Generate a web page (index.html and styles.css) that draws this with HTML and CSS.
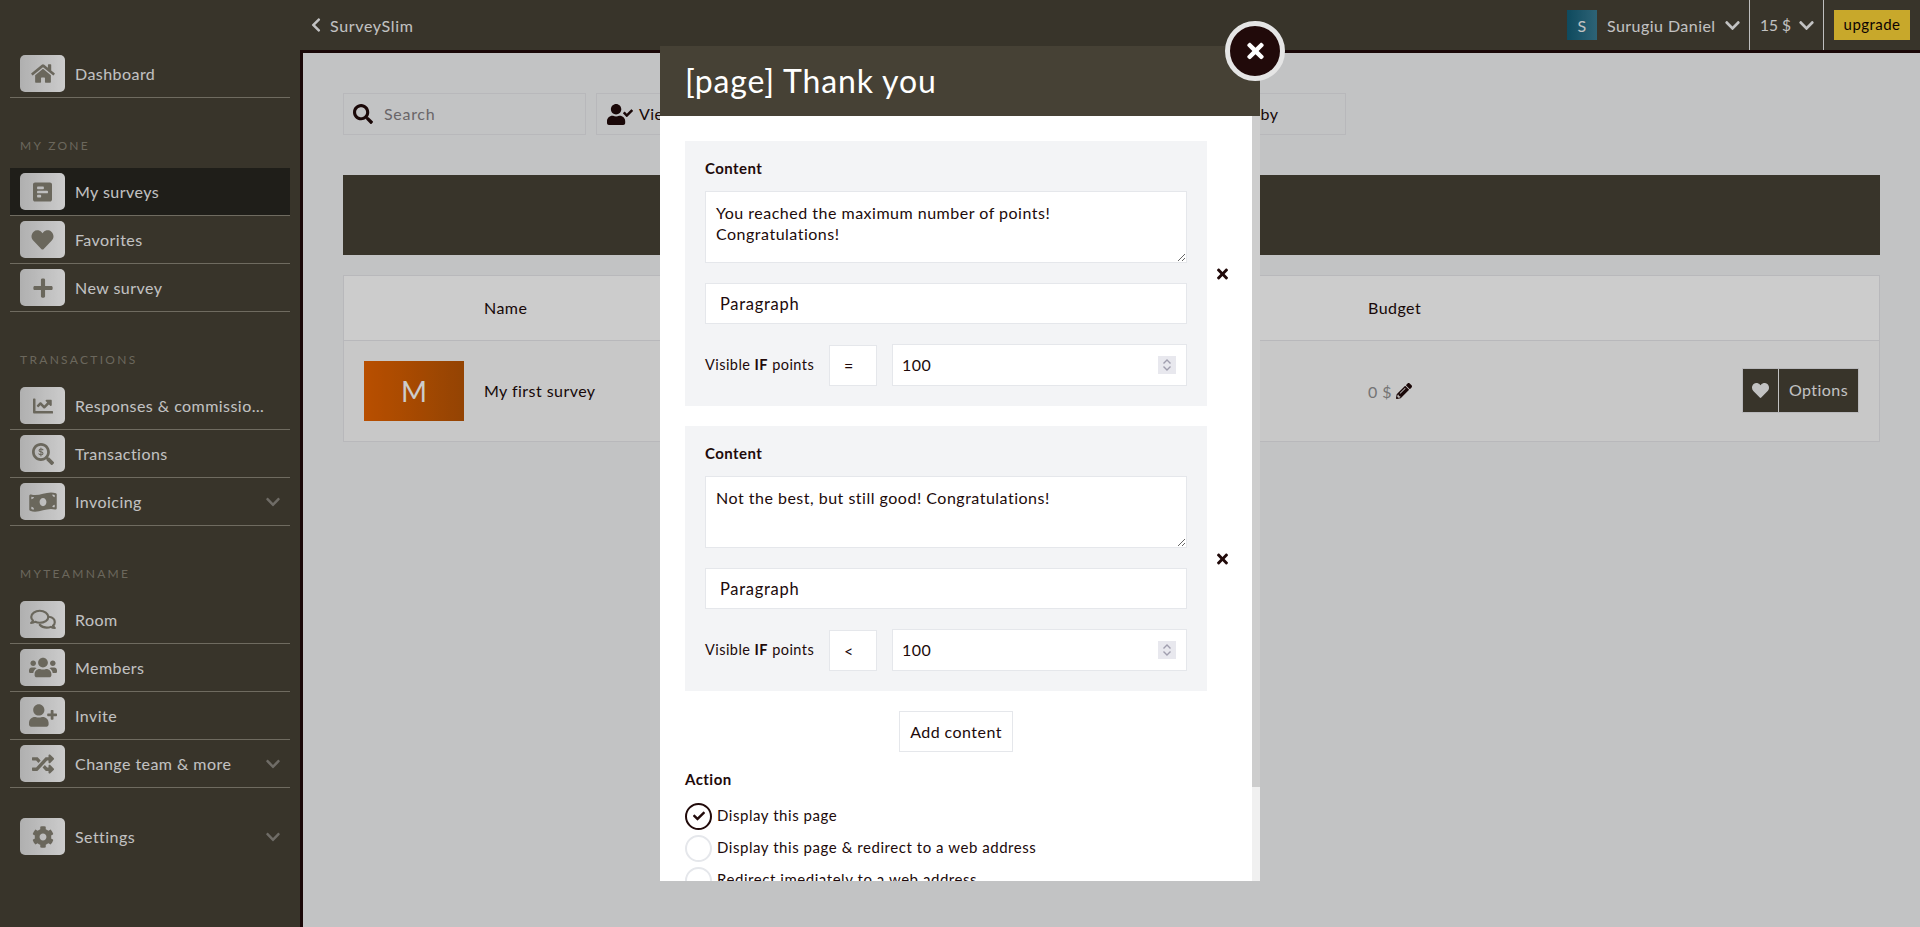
FILE: index.html
```html
<!DOCTYPE html>
<html lang="en">
<head>
<meta charset="utf-8">
<title>SurveySlim</title>
<link rel="stylesheet" href="styles.css">
</head>
<body>
<svg class="sprite" xmlns="http://www.w3.org/2000/svg">
<symbol id="i-down" viewBox="0 0 448 512"><path d="M207.029 381.476L12.686 187.132c-9.373-9.373-9.373-24.569 0-33.941l22.667-22.667c9.357-9.357 24.522-9.375 33.901-.04L224 284.505l154.745-154.021c9.379-9.335 24.544-9.317 33.901.04l22.667 22.667c9.373 9.373 9.373 24.569 0 33.941L240.971 381.476c-9.373 9.372-24.569 9.372-33.942 0z"/></symbol>
<symbol id="i-left" viewBox="0 0 320 512"><path d="M34.52 239.03L228.87 44.69c9.37-9.37 24.57-9.37 33.94 0l22.67 22.67c9.36 9.36 9.37 24.52.04 33.9L131.49 256l154.02 154.75c9.34 9.38 9.32 24.54-.04 33.9l-22.67 22.67c-9.37 9.37-24.57 9.37-33.94 0L34.52 272.97c-9.37-9.37-9.37-24.57 0-33.94z"/></symbol>
<symbol id="i-heart" viewBox="0 0 512 512"><path d="M462.3 62.6C407.5 15.9 326 24.3 275.7 76.2L256 96.5l-19.7-20.3C186.1 24.3 104.5 15.9 49.7 62.6c-62.8 53.6-66.1 149.8-9.9 207.9l193.5 199.8c12.5 12.9 32.8 12.9 45.3 0l193.5-199.8c56.3-58.1 53-154.3-9.8-207.9z"/></symbol>
<symbol id="i-plus" viewBox="0 0 448 512"><path d="M416 208H272V64c0-17.67-14.33-32-32-32h-32c-17.67 0-32 14.33-32 32v144H32c-17.67 0-32 14.33-32 32v32c0 17.67 14.33 32 32 32h144v144c0 17.67 14.33 32 32 32h32c17.67 0 32-14.33 32-32V304h144c17.67 0 32-14.33 32-32v-32c0-17.67-14.33-32-32-32z"/></symbol>
<symbol id="i-search" viewBox="0 0 512 512"><path d="M505 442.7L405.3 343c-4.5-4.5-10.6-7-17-7H372c27.6-35.3 44-79.7 44-128C416 93.1 322.9 0 208 0S0 93.1 0 208s93.1 208 208 208c48.3 0 92.7-16.4 128-44v16.3c0 6.4 2.5 12.5 7 17l99.7 99.7c9.4 9.4 24.6 9.4 33.9 0l28.3-28.3c9.4-9.4 9.4-24.6.1-34zM208 336c-70.7 0-128-57.2-128-128 0-70.7 57.2-128 128-128 70.7 0 128 57.2 128 128 0 70.7-57.2 128-128 128z"/></symbol>
<symbol id="i-dollar-search" viewBox="0 0 512 512"><path d="M505 442.7L405.3 343c-4.5-4.5-10.6-7-17-7H372c27.6-35.3 44-79.7 44-128C416 93.1 322.9 0 208 0S0 93.1 0 208s93.1 208 208 208c48.3 0 92.7-16.4 128-44v16.3c0 6.4 2.5 12.5 7 17l99.7 99.7c9.4 9.4 24.6 9.4 33.9 0l28.3-28.3c9.4-9.4 9.4-24.6.1-34zM208 352c-79.5 0-144-64.500-144-144S128.500 64 208 64s144 64.500 144 144-64.500 144-144 144z"/><path d="M256 160c-8-14-26-20-48-20-24 0-44 12-44 32 0 44 92 24 92 70 0 20-20 32-48 32-24 0-42-8-50-22M208 116v184" fill="none" stroke="currentColor" stroke-width="24" stroke-linecap="round"/></symbol>
<symbol id="i-times" viewBox="0 0 352 512"><path d="M242.72 256l100.07-100.07c12.28-12.28 12.28-32.19 0-44.48l-22.24-22.24c-12.28-12.28-32.19-12.28-44.48 0L176 189.28 75.93 89.21c-12.28-12.28-32.19-12.28-44.48 0L9.21 111.45c-12.28 12.28-12.28 32.19 0 44.48L109.28 256 9.21 356.07c-12.28 12.28-12.28 32.19 0 44.48l22.24 22.24c12.28 12.28 32.2 12.28 44.48 0L176 322.72l100.07 100.07c12.28 12.28 32.2 12.28 44.48 0l22.24-22.24c12.28-12.28 12.28-32.19 0-44.48L242.72 256z"/></symbol>
<symbol id="i-home" viewBox="0 0 576 512"><path d="M280.37 148.26L96 300.11V464a16 16 0 0 0 16 16l112.06-.29a16 16 0 0 0 15.92-16V368a16 16 0 0 1 16-16h64a16 16 0 0 1 16 16v95.64a16 16 0 0 0 16 16.05L464 480a16 16 0 0 0 16-16V300L295.67 148.26a12.19 12.19 0 0 0-15.3 0zM571.6 251.47L488 182.56V44.05a12 12 0 0 0-12-12h-56a12 12 0 0 0-12 12v72.61L318.47 43a48 48 0 0 0-61 0L4.34 251.47a12 12 0 0 0-1.6 16.9l25.5 31A12 12 0 0 0 45.15 301l235.22-193.74a12.19 12.19 0 0 1 15.3 0L530.9 301a12 12 0 0 0 16.9-1.6l25.5-31a12 12 0 0 0-1.7-16.93z"/></symbol>
<symbol id="i-poll" viewBox="0 0 448 512"><path d="M448 432V80c0-26.5-21.5-48-48-48H48C21.5 32 0 53.5 0 80v352c0 26.5 21.5 48 48 48h352c26.500 0 48-21.500 48-48zM112 192c-8.840 0-16-7.160-16-16v-32c0-8.840 7.160-16 16-16h128c8.840 0 16 7.160 16 16v32c0 8.840-7.160 16-16 16H112zm0 96c-8.840 0-16-7.160-16-16v-32c0-8.840 7.160-16 16-16h224c8.840 0 16 7.160 16 16v32c0 8.840-7.160 16-16 16H112zm0 96c-8.840 0-16-7.160-16-16v-32c0-8.840 7.160-16 16-16h64c8.840 0 16 7.160 16 16v32c0 8.840-7.160 16-16 16h-64z"/></symbol>
<symbol id="i-chart" viewBox="0 0 512 512"><path d="M496 384H64V80c0-8.840-7.160-16-16-16H16C7.160 64 0 71.160 0 80v336c0 17.670 14.330 32 32 32h464c8.840 0 16-7.160 16-16v-32c0-8.840-7.160-16-16-16zM464 96H345.940c-21.380 0-32.090 25.850-16.970 40.970l32.400 32.400L288 242.750l-73.370-73.370c-12.500-12.500-32.760-12.500-45.250 0l-68.690 68.690c-6.250 6.250-6.250 16.380 0 22.630l22.620 22.620c6.250 6.250 16.380 6.250 22.630 0L192 237.250l73.370 73.370c12.500 12.500 32.760 12.500 45.250 0l96-96 32.400 32.400c15.120 15.120 40.970 4.410 40.970-16.970V112c.01-8.840-7.150-16-15.990-16z"/></symbol>
<symbol id="i-money" viewBox="0 0 640 512"><path d="M621.160 54.460C582.370 38.190 543.550 32 504.750 32c-123.170-.01-246.330 62.340-369.500 62.340-30.890 0-61.760-3.920-92.650-13.720-3.470-1.100-6.950-1.620-10.350-1.620C15.040 79 0 92.320 0 110.810v317.260c0 12.630 7.230 24.600 18.840 29.460C57.630 473.810 96.450 480 135.250 480c123.170 0 246.340-62.350 369.510-62.350 30.890 0 61.760 3.920 92.650 13.720 3.470 1.100 6.950 1.620 10.350 1.620 17.210 0 32.250-13.320 32.250-31.810V83.930c-.01-12.640-7.240-24.600-18.850-29.470zM48 132.220c20.120 5.040 41.120 7.570 62.720 8.930C104.840 170.540 79 192.690 48 192.690v-60.470zm0 285v-47.780c34.370 0 62.180 27.270 63.710 61.400-22.530-1.810-43.590-6.310-63.710-13.620zM320 352c-44.190 0-80-42.990-80-96 0-53.020 35.820-96 80-96s80 42.980 80 96c0 53.030-35.830 96-80 96zm272 27.780c-17.520-4.390-35.710-6.850-54.320-8.440 5.870-26.080 27.500-45.880 54.320-49.280v57.720zm0-236.110c-30.890-3.910-54.860-29.700-55.810-61.550 19.540 2.170 38.090 6.230 55.810 12.660v48.890z"/></symbol>
<symbol id="i-comments" viewBox="0 0 576 512"><path d="M216 62C112 62 26 124 26 200c0 30 14 58 38 80-8 20-22 38-40 54 36 0 66-10 90-28 30 14 64 22 102 22 104 0 190-56 190-128S320 62 216 62z" fill="none" stroke="currentColor" stroke-width="48" stroke-linejoin="round"/><path d="M420 196c76 12 130 60 130 122 0 28-14 56-38 76 6 18 20 34 38 50-36 0-64-8-86-24-26 12-58 18-92 18-66 0-122-24-156-64" fill="none" stroke="currentColor" stroke-width="48" stroke-linejoin="round" stroke-linecap="round"/></symbol>
<symbol id="i-users" viewBox="0 0 640 512"><path d="M96 224c35.300 0 64-28.700 64-64s-28.700-64-64-64-64 28.700-64 64 28.700 64 64 64zm448 0c35.300 0 64-28.700 64-64s-28.700-64-64-64-64 28.700-64 64 28.700 64 64 64zm32 32h-64c-17.600 0-33.500 7.100-45.100 18.600 40.300 22.100 68.900 62 75.100 109.400h66c17.700 0 32-14.300 32-32v-32c0-35.300-28.700-64-64-64zm-256 0c61.900 0 112-50.100 112-112S381.900 32 320 32 208 82.100 208 144s50.100 112 112 112zm76.800 32h-8.300c-20.800 10-43.900 16-68.500 16s-47.600-6-68.500-16h-8.300C179.600 288 128 339.600 128 403.200V432c0 26.500 21.500 48 48 48h288c26.500 0 48-21.500 48-48v-28.800c0-63.600-51.600-115.200-115.200-115.200zm-223.700-13.400C161.500 263.100 145.600 256 128 256H64c-35.300 0-64 28.700-64 64v32c0 17.700 14.300 32 32 32h65.900c6.300-47.400 34.900-87.300 75.200-109.400z"/></symbol>
<symbol id="i-user-plus" viewBox="0 0 640 512"><path d="M624 208h-64v-64c0-8.800-7.200-16-16-16h-32c-8.800 0-16 7.200-16 16v64h-64c-8.800 0-16 7.200-16 16v32c0 8.800 7.200 16 16 16h64v64c0 8.800 7.200 16 16 16h32c8.800 0 16-7.200 16-16v-64h64c8.800 0 16-7.200 16-16v-32c0-8.800-7.200-16-16-16zm-400 48c70.700 0 128-57.300 128-128S294.700 0 224 0 96 57.300 96 128s57.300 128 128 128zm89.600 32h-16.700c-22.200 10.200-46.900 16-72.900 16s-50.600-5.800-72.900-16h-16.700C60.200 288 0 348.200 0 422.400V464c0 26.500 21.500 48 48 48h352c26.500 0 48-21.500 48-48v-41.600c0-74.200-60.200-134.400-134.400-134.400z"/></symbol>
<symbol id="i-user-check" viewBox="0 0 640 512"><path d="M224 256c70.700 0 128-57.300 128-128S294.700 0 224 0 96 57.300 96 128s57.300 128 128 128zm89.600 32h-16.700c-22.200 10.200-46.900 16-72.900 16s-50.600-5.800-72.900-16h-16.700C60.200 288 0 348.200 0 422.400V464c0 26.500 21.500 48 48 48h352c26.500 0 48-21.500 48-48v-41.600c0-74.200-60.200-134.400-134.400-134.400zm323-128.400l-27.800-28.100c-4.600-4.700-12.100-4.700-16.800-.1l-104.800 104-45.500-45.800c-4.600-4.700-12.100-4.700-16.800-.1l-28.100 27.900c-4.700 4.600-4.700 12.100-.1 16.800l81.700 82.300c4.600 4.700 12.100 4.700 16.800.1l141.300-140.200c4.600-4.700 4.700-12.200.1-16.800z"/></symbol>
<symbol id="i-random" viewBox="0 0 512 512"><path d="M504.971 359.029c9.373 9.373 9.373 24.569 0 33.941l-80 79.984c-15.010 15.010-40.971 4.490-40.971-16.971V416h-58.785a12.004 12.004 0 0 1-8.773-3.812l-70.556-75.596 53.333-57.143L352 336h32v-39.981c0-21.438 25.943-31.998 40.971-16.971l80 79.981zM12 176h84l52.781 56.551 53.333-57.143-70.556-75.596A11.999 11.999 0 0 0 122.785 96H12c-6.627 0-12 5.373-12 12v56c0 6.627 5.373 12 12 12zm372 0v39.984c0 21.460 25.961 31.980 40.971 16.971l80-79.984c9.373-9.373 9.373-24.569 0-33.941l-80-79.981C409.943 24.021 384 34.582 384 56.019V96h-58.785a12.004 12.004 0 0 0-8.773 3.812L96 336H12c-6.627 0-12 5.373-12 12v56c0 6.627 5.373 12 12 12h110.785c3.326 0 6.503-1.381 8.773-3.812L352 176h32z"/></symbol>
<symbol id="i-cog" viewBox="0 0 512 512"><path d="M487.400 315.700l-42.600-24.600c4.300-23.200 4.300-47 0-70.200l42.600-24.600c4.900-2.800 7.100-8.600 5.500-14-11.100-35.600-30-67.800-54.700-94.600-3.800-4.100-10-5.100-14.800-2.300L380.800 110c-17.900-15.400-38.500-27.300-60.800-35.100V25.800c0-5.600-3.900-10.500-9.400-11.700-36.700-8.200-74.300-7.800-109.200 0-5.500 1.200-9.400 6.100-9.400 11.700V75c-22.200 7.900-42.800 19.800-60.800 35.100L88.700 85.500c-4.900-2.800-11-1.900-14.800 2.300-24.700 26.700-43.600 58.900-54.700 94.600-1.700 5.400.6 11.200 5.500 14L67.300 221c-4.300 23.200-4.300 47 0 70.200l-42.600 24.600c-4.900 2.800-7.100 8.600-5.500 14 11.100 35.600 30 67.800 54.700 94.600 3.800 4.100 10 5.100 14.800 2.300l42.600-24.600c17.900 15.400 38.500 27.300 60.800 35.100v49.200c0 5.600 3.900 10.500 9.400 11.700 36.700 8.200 74.300 7.800 109.200 0 5.500-1.200 9.400-6.100 9.400-11.700v-49.200c22.200-7.900 42.800-19.800 60.800-35.100l42.600 24.600c4.900 2.800 11 1.900 14.800-2.300 24.700-26.700 43.600-58.900 54.700-94.600 1.500-5.500-.7-11.300-5.600-14.100zM256 336c-44.100 0-80-35.900-80-80s35.900-80 80-80 80 35.900 80 80-35.900 80-80 80z"/></symbol>
<symbol id="i-pencil" viewBox="0 0 512 512"><path d="M497.900 142.100l-46.100 46.100c-4.700 4.700-12.300 4.700-17 0l-111-111c-4.700-4.700-4.700-12.300 0-17l46.100-46.100c18.700-18.700 49.100-18.700 67.900 0l60.100 60.100c18.800 18.700 18.800 49.100 0 67.900zM284.200 99.800L21.600 362.400.4 483.900c-2.900 16.400 11.400 30.600 27.800 27.800l121.500-21.300 262.600-262.600c4.700-4.700 4.700-12.300 0-17l-111-111c-4.800-4.700-12.400-4.700-17.100 0zM124.100 339.900c-5.500-5.500-5.500-14.300 0-19.800l154-154c5.500-5.500 14.300-5.500 19.800 0s5.500 14.300 0 19.800l-154 154c-5.500 5.500-14.300 5.500-19.800 0zM88 424h48v36.300l-64.500 11.300-31.100-31.100L51.700 376H88v48z"/></symbol>
<symbol id="i-check" viewBox="0 0 512 512"><path d="M173.898 439.404l-166.400-166.400c-9.997-9.997-9.997-26.206 0-36.204l36.203-36.204c9.997-9.998 26.207-9.998 36.204 0L192 312.690 432.095 72.596c9.997-9.997 26.207-9.997 36.204 0l36.203 36.204c9.997 9.997 9.997 26.206 0 36.204l-294.400 294.401c-9.998 9.997-26.207 9.997-36.204-.001z"/></symbol>
<symbol id="i-spin" viewBox="0 0 18 18"><path d="M5.500 7.500L9 4l3.500 3.500M5.500 10.500L9 14l3.500-3.500" fill="none" stroke="currentColor" stroke-width="1.400"/></symbol>
</svg>

<div class="app">
  <header class="topbar">
    <a class="brand"><svg class="brand-back"><use href="#i-left"/></svg><span>SurveySlim</span></a>
    <div class="top-right">
      <div class="top-cell top-user">
        <span class="avatar">S</span>
        <span class="top-name">Surugiu Daniel</span>
        <svg class="top-chev"><use href="#i-down"/></svg>
      </div>
      <div class="top-cell top-credit">
        <span class="top-amount">15 $</span>
        <svg class="top-chev"><use href="#i-down"/></svg>
      </div>
      <div class="top-cell top-up"><button class="upgrade">upgrade</button></div>
    </div>
  </header>

  <nav class="sidebar">
    <a class="nav-row"><span class="nav-ico"><svg class="ico-home"><use href="#i-home"/></svg></span><span class="nav-text">Dashboard</span></a>

    <div class="nav-title">MY ZONE</div>
    <a class="nav-row is-active"><span class="nav-ico"><svg class="ico-poll"><use href="#i-poll"/></svg></span><span class="nav-text">My surveys</span></a>
    <a class="nav-row"><span class="nav-ico"><svg class="ico-heart"><use href="#i-heart"/></svg></span><span class="nav-text">Favorites</span></a>
    <a class="nav-row"><span class="nav-ico"><svg class="ico-plus"><use href="#i-plus"/></svg></span><span class="nav-text">New survey</span></a>

    <div class="nav-title">TRANSACTIONS</div>
    <a class="nav-row"><span class="nav-ico"><svg class="ico-chart"><use href="#i-chart"/></svg></span><span class="nav-text nav-clip">Responses &amp; commissions</span></a>
    <a class="nav-row"><span class="nav-ico"><svg class="ico-dollar"><use href="#i-dollar-search"/></svg></span><span class="nav-text">Transactions</span></a>
    <a class="nav-row"><span class="nav-ico"><svg class="ico-money"><use href="#i-money"/></svg></span><span class="nav-text">Invoicing</span><svg class="nav-chev"><use href="#i-down"/></svg></a>

    <div class="nav-title">MYTEAMNAME</div>
    <a class="nav-row"><span class="nav-ico"><svg class="ico-comments"><use href="#i-comments"/></svg></span><span class="nav-text">Room</span></a>
    <a class="nav-row"><span class="nav-ico"><svg class="ico-users"><use href="#i-users"/></svg></span><span class="nav-text">Members</span></a>
    <a class="nav-row"><span class="nav-ico"><svg class="ico-users"><use href="#i-user-plus"/></svg></span><span class="nav-text">Invite</span></a>
    <a class="nav-row"><span class="nav-ico"><svg class="ico-random"><use href="#i-random"/></svg></span><span class="nav-text">Change team &amp; more</span><svg class="nav-chev"><use href="#i-down"/></svg></a>

    <a class="nav-row nav-settings"><span class="nav-ico"><svg class="ico-cog"><use href="#i-cog"/></svg></span><span class="nav-text">Settings</span><svg class="nav-chev"><use href="#i-down"/></svg></a>
  </nav>

  <main class="main">
    <div class="toolbar">
      <label class="tool tool-search"><svg class="tool-ico"><use href="#i-search"/></svg><span class="tool-ph">Search</span></label>
      <div class="tool tool-view"><svg class="tool-ico-user"><use href="#i-user-check"/></svg><span class="tool-txt">View all</span></div>
      <div class="tool tool-sort"><span class="tool-txt">Sort by</span></div>
    </div>
    <div class="banner"></div>
    <section class="table">
      <div class="t-row t-head"><span></span><span class="t-txt">Name</span><span class="t-txt">Budget</span><span></span></div>
      <div class="t-row t-body">
        <span class="thumb">M</span>
        <span class="t-txt">My first survey</span>
        <span class="budget">0 $ <svg class="pencil"><use href="#i-pencil"/></svg></span>
        <span class="actions"><button class="act act-heart"><svg><use href="#i-heart"/></svg></button><button class="act act-opt">Options</button></span>
      </div>
    </section>
  </main>
</div>

<div class="overlay">
  <div class="modal">
    <button class="close"><svg><use href="#i-times"/></svg></button>
    <header class="modal-head"><span class="modal-title">[page] Thank you</span></header>
    <div class="modal-body">
      <div class="modal-inner">
        <div class="block">
          <div class="panel">
            <div class="p-label">Content</div>
            <textarea class="p-area">You reached the maximum number of points!
Congratulations!</textarea>
            <select class="p-select"><option>Paragraph</option></select>
            <div class="p-cond">
              <span class="p-vis">Visible <b>IF</b> points</span>
              <select class="p-op"><option>=</option></select>
              <div class="p-numwrap">
                <input class="p-num" type="number" value="100">
                <svg class="p-spin"><use href="#i-spin"/></svg>
              </div>
            </div>
          </div>
          <svg class="p-del"><use href="#i-times"/></svg>
        </div>
        <div class="block">
          <div class="panel">
            <div class="p-label">Content</div>
            <textarea class="p-area">Not the best, but still good! Congratulations!</textarea>
            <select class="p-select"><option>Paragraph</option></select>
            <div class="p-cond">
              <span class="p-vis">Visible <b>IF</b> points</span>
              <select class="p-op"><option>&lt;</option></select>
              <div class="p-numwrap">
                <input class="p-num" type="number" value="100">
                <svg class="p-spin"><use href="#i-spin"/></svg>
              </div>
            </div>
          </div>
          <svg class="p-del"><use href="#i-times"/></svg>
        </div>
        <div class="add-wrap"><button class="add">Add content</button></div>
        <div class="act-label">Action</div>
        <div class="radio"><span class="dot dot-on"><svg><use href="#i-check"/></svg></span><span class="radio-txt">Display this page</span></div>
        <div class="radio"><span class="dot"></span><span class="radio-txt">Display this page &amp; redirect to a web address</span></div>
        <div class="radio"><span class="dot"></span><span class="radio-txt">Redirect imediately to a web address</span></div>
      </div>
      <div class="track"><div class="thumbbar"></div></div>
    </div>
  </div>
</div>
</body>
</html>
```
FILE: styles.css
```css
* { box-sizing: border-box; }
html, body { margin: 0; height: 100%; overflow: hidden; }
body { font-family: "Lato", "Noto Sans", sans-serif; font-size: 16px; color: #210a0a; letter-spacing: .45px; }
.sprite { width: 0; height: 0; position: absolute; }
svg { fill: currentColor; display: block; }
button, select, textarea, input { font: inherit; letter-spacing: inherit; color: inherit; }

.app { display: grid; grid-template-columns: 300px 1fr; grid-template-rows: 50px 1fr; height: 927px; background: #464135; }

.topbar { grid-column: 1 / 3; display: flex; justify-content: space-between; color: #f3f3f3; padding-left: 311px; padding-right: 10px; }
.brand { display: flex; align-items: center; gap: 9px; letter-spacing: .65px; }
.brand-back { width: 10px; height: 16px; }
.top-right { display: flex; align-items: stretch; }
.top-cell { display: flex; align-items: center; }
.avatar { width: 30px; height: 30px; background: linear-gradient(90deg, #125d76, #3a7c94); display: flex; align-items: center; justify-content: center; font-size: 16px; }
.top-name { margin-left: 10px; width: 108px; white-space: nowrap; }
.top-chev { width: 15px; height: 17px; margin-left: 10px; }
.top-user { padding-right: 9px; border-right: 1px solid #eee; }
.top-amount { width: 29px; white-space: nowrap; letter-spacing: 0; font-size: 15.500px; }
.top-credit { padding: 0 9px 0 10px; border-right: 1px solid #eee; }
.top-up { padding-left: 10px; }
.upgrade { width: 76px; height: 30px; border: 0; padding: 0 0 2px; background: #fbd236; font-size: 15px; color: #100404; }

.sidebar { padding: 0 10px; color: #f3f3f3; }
.nav-row { display: flex; align-items: center; height: 48px; gap: 10px; padding: 0 10px; border-bottom: 1px solid #8b8678; }
.nav-row.is-active { background: #272620; }
.nav-ico { flex: none; width: 45px; height: 37px; border-radius: 5px; background: linear-gradient(90deg, #dcdcdc, #fff); color: #858174; display: flex; align-items: center; justify-content: center; }
.nav-text { white-space: nowrap; }
.nav-clip { width: 190px; overflow: hidden; text-overflow: ellipsis; }
.nav-chev { flex: none; width: 14px; height: 16px; margin-left: auto; color: #8b8780; }
.nav-title { height: 70px; padding: 40px 0 0 10px; font-size: 12px; line-height: 16px; letter-spacing: 2.300px; color: #868174; }
.nav-settings { margin-top: 25px; border-bottom: 0; padding-bottom: 1px; }
.ico-home { width: 24px; height: 21px; }
.ico-poll { width: 19px; height: 22px; }
.ico-heart { width: 23px; height: 22px; }
.ico-plus { width: 20px; height: 22px; }
.ico-chart { width: 22px; height: 20px; }
.ico-dollar { width: 22px; height: 22px; }
.ico-money { width: 28px; height: 22px; }
.ico-comments { width: 26px; height: 23px; }
.ico-users { width: 28px; height: 23px; }
.ico-random { width: 22px; height: 22px; }
.ico-cog { width: 22px; height: 22px; }

.main { background: #f3f4f6; border-top: 3px solid #210a0a; border-left: 3px solid #210a0a; padding: 40px; }
.toolbar { display: flex; gap: 10px; height: 42px; margin-bottom: 40px; }
.tool { display: flex; align-items: center; border: 1px solid #e6e7ea; }
.tool-search { width: 243px; padding-left: 9px; }
.tool-ico { width: 20px; height: 20px; margin-right: 11px; }
.tool-ph { color: #857f82; padding-bottom: 2px; letter-spacing: .7px; }
.tool-txt { padding-bottom: 2px; }
.tool-view { width: 610px; padding-left: 10px; gap: 6px; }
.tool-ico-user { width: 26px; height: 21px; }
.tool-sort { width: 130px; padding-left: 8px; }
.banner { height: 80px; background: #464135; margin-bottom: 20px; }
.table { border: 1px solid #e6e7ea; height: 167px; }
.t-row { display: grid; grid-template-columns: 140px 884px 1fr auto; align-items: center; }
.t-txt { padding-bottom: 2px; }
.t-head { height: 65px; background: #fff; border-bottom: 1px solid #e6e7ea; padding-right: 20px; }
.t-body { height: 100px; background: #fafafa; padding-right: 20px; }
.thumb { width: 100px; height: 60px; margin-left: 20px; background: linear-gradient(90deg, #e76300, #b95504); color: #fff; display: flex; align-items: center; justify-content: center; font-size: 28px; letter-spacing: 0; }
.budget { display: flex; align-items: center; gap: 4px; color: #929292; }
.pencil { width: 16px; height: 16px; color: #210a0a; }
.actions { display: flex; height: 45px; margin-bottom: 1px; border: 1px solid #e6e7ea; }
.act { border: 0; background: #464135; color: #f3f3f3; padding: 0; }
.act-heart { width: 36px; border-right: 1px solid #f3f3f3; }
.act-heart svg { width: 17px; height: 17px; margin: auto; }
.act-opt { width: 79px; padding-bottom: 2px; }

.overlay { position: fixed; inset: 0; background: rgba(0, 0, 0, .2); display: flex; align-items: center; justify-content: center; }
.modal { position: relative; width: 600px; height: 90vh; background: #fff; display: flex; flex-direction: column; }
.close { position: absolute; top: -25px; right: -25px; width: 60px; height: 60px; border-radius: 50%; border: 5px solid #e5e5e5; background: #210a0a; color: #fff; padding: 0; display: flex; align-items: center; justify-content: center; z-index: 1; }
.close svg { width: 17px; height: 24px; }
.modal-head { flex: none; height: 70px; background: #464135; color: #fff; display: flex; align-items: center; padding-left: 25px; font-size: 32px; letter-spacing: .85px; }
.modal-title { padding-bottom: 2px; }
.modal-body { flex: 1; min-height: 0; display: flex; overflow: hidden; }
.modal-inner { flex: 1; min-width: 0; overflow: hidden; padding: 25px 0 0 25px; }
.track { flex: none; width: 8px; background: #f0f0f0; }
.thumbbar { height: 671px; background: #cdcdcd; }
.block { display: flex; align-items: center; margin-bottom: 20px; }
.panel { width: 522px; height: 265px; background: #f3f4f6; padding: 20px; }
.p-del { width: 11px; height: 16px; margin-left: 10px; }
.p-label { font-size: 15px; line-height: 14px; font-weight: 700; margin-bottom: 16px; }
.p-area { display: block; width: 482px; height: 72px; margin: 0 0 20px; padding: 10px; border: 1px solid #e5e7eb; background: #fff; font-size: 16px; line-height: 21px; letter-spacing: .5px; border-radius: 0; outline: 0; }
.p-select { display: block; width: 482px; height: 41px; margin-bottom: 20px; padding: 0 0 0 14px; border: 1px solid #e5e7eb; background: #fff; appearance: none; border-radius: 0; font-size: 16.500px; letter-spacing: .7px; }
.p-cond { display: flex; align-items: center; height: 42px; }
.p-vis { width: 124px; font-size: 14.500px; white-space: nowrap; padding-bottom: 2px; }
.p-op { width: 48px; height: 41px; margin-right: 15px; padding: 0 0 0 14px; border: 1px solid #e5e7eb; background: #fff; appearance: none; border-radius: 0; }
.p-numwrap { position: relative; width: 295px; height: 42px; }
.p-num { display: block; width: 100%; height: 100%; padding: 0 9px 2px; border: 1px solid #e5e7eb; background: #fff; border-radius: 0; outline: 0; appearance: textfield; }
.p-num::-webkit-inner-spin-button { appearance: none; }
.p-spin { position: absolute; top: 12px; right: 11px; width: 18px; height: 18px; background: #e8e8ee; color: #a09eae; }
.add-wrap { width: 542px; display: flex; justify-content: center; margin-bottom: 20px; }
.add { width: 114px; height: 41px; background: #fff; border: 1px solid #e5e7eb; padding: 0; }
.act-label { font-size: 15px; font-weight: 700; line-height: 14px; margin-bottom: 14px; }
.radio { display: flex; align-items: center; gap: 5px; height: 32px; font-size: 15px; letter-spacing: .55px; white-space: nowrap; }
.radio-txt { padding-bottom: 2px; }
.dot { width: 27px; height: 27px; border-radius: 50%; border: 2px solid #e5e7eb; display: flex; align-items: center; justify-content: center; }
.dot-on { border-color: #210a0a; }
.dot-on svg { width: 12px; height: 12px; }
```
